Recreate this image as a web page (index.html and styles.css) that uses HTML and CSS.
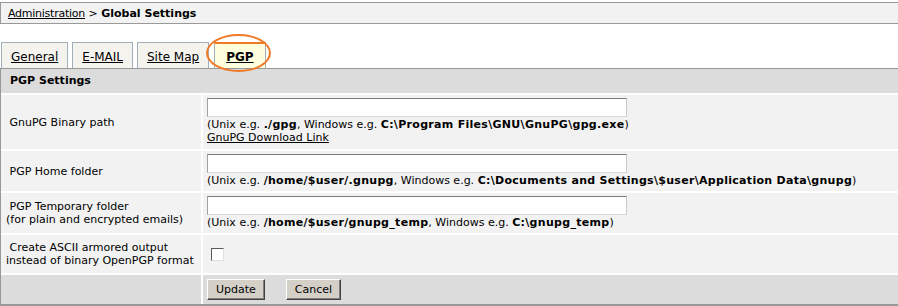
FILE: index.html
```html
<!DOCTYPE html>
<html>
<head>
<meta charset="utf-8">
<title>Global Settings</title>
<link rel="stylesheet" href="styles.css">
</head>
<body>
<div class="crumb"><a href="#">Administration</a> &gt; <b>Global Settings</b></div>

<div class="tabs">
  <a class="tab" href="#">General</a>
  <a class="tab" href="#">E-MAIL</a>
  <a class="tab" href="#">Site Map</a>
  <a class="tab active" href="#">PGP<span class="ring"></span></a>
</div>

<div class="panel">
  <div class="head">PGP Settings</div>

  <div class="label">&nbsp;GnuPG Binary path</div>
  <div class="value first">
    <input class="field" type="text">
    <div class="hint">(Unix e.g. <b>./gpg</b>, Windows e.g. <b>C:\Program Files\GNU\GnuPG\gpg.exe</b>)</div>
    <a class="hint" href="#">GnuPG Download Link</a>
  </div>

  <div class="label">&nbsp;PGP Home folder</div>
  <div class="value">
    <input class="field" type="text">
    <div class="hint">(Unix e.g. <b>/home/$user/.gnupg</b>, Windows e.g. <b>C:\Documents and Settings\$user\Application Data\gnupg</b>)</div>
  </div>

  <div class="label">&nbsp;PGP Temporary folder<br>(for plain and encrypted emails)</div>
  <div class="value">
    <input class="field" type="text">
    <div class="hint">(Unix e.g. <b>/home/$user/gnupg_temp</b>, Windows e.g. <b>C:\gnupg_temp</b>)</div>
  </div>

  <div class="label">&nbsp;Create ASCII armored output<br>instead of binary OpenPGP format</div>
  <div class="value center"><span class="check"></span></div>

  <div class="foot"></div>
  <div class="foot buttons">
    <button class="btn" type="button">Update</button>
    <button class="btn" type="button">Cancel</button>
  </div>
</div>
</body>
</html>
```

FILE: styles.css
```css
html, body {
  margin: 0;
  padding: 0;
  background: #ffffff;
  overflow: hidden;
}
body {
  font-family: "DejaVu Sans", Verdana, sans-serif;
  font-size: 11px;
  line-height: 13px;
  color: #000;
}
a { color: #000; text-decoration: underline; }

.crumb {
  margin-top: 2px;
  height: 20px;
  line-height: 21px;
  padding-left: 7px;
  background: #f2f2f2;
  border-top: 1px solid #999;
  border-bottom: 1px solid #999;
  border-left: 1px solid #999;
}
.crumb a { letter-spacing: -0.25px; }

.tabs {
  display: flex;
  gap: 4px;
  margin-top: 18px;
  padding-left: 1px;
  height: 26px;
  align-items: stretch;
  font-size: 12px;
}
.tab {
  position: relative;
  display: flex;
  align-items: center;
  padding: 3px 9px 0 9px;
  background: #f5f3ee;
  border: 1px solid #9fb0bc;
  border-bottom: none;
}
.tab.active {
  margin-left: 1px;
  padding: 3px 11px 0 11px;
  background: #ffffdd;
  border-top: 2px solid #f07a26;
  font-weight: bold;
}
.ring {
  position: absolute;
  left: -9px;
  top: -10px;
  width: 65px;
  height: 38px;
  box-sizing: border-box;
  border: 2px solid #f07a26;
  border-radius: 50%;
  pointer-events: none;
}

.panel {
  display: grid;
  grid-template-columns: 200px 1fr;
  column-gap: 2px;
  row-gap: 2px;
  background: #fff;
  border-top: 1px solid #999;
  border-left: 1px solid #999;
  border-bottom: 2px solid #999;
}
.head {
  grid-column: 1 / span 2;
  background: #dcdcdc;
  font-weight: bold;
  height: 24px;
  line-height: 24px;
  padding-left: 9px;
}
.label {
  background: #f2f2f2;
  display: flex;
  align-items: center;
  padding: 0 5px;
}
.value {
  background: #f2f2f2;
  padding: 3px 4px 4px 4px;
}
.value.first { padding-bottom: 5px; }
.value b { letter-spacing: 0.3px; }
.value.center {
  display: flex;
  align-items: center;
  padding: 0 4px 0 8px;
  height: 38px;
}
.field {
  display: block;
  box-sizing: border-box;
  width: 420px;
  height: 19px;
  margin: 0 0 1px 0;
  background: #fff;
  border: 1px solid;
  border-color: #7a7a7a #c8c8c8 #d8d8d8 #a0a0a0;
}
.hint { display: block; }
.check {
  display: block;
  width: 13px;
  height: 13px;
  box-sizing: border-box;
  background: #fff;
  border: 1px solid;
  border-color: #5a5a5a #e0e0e0 #e0e0e0 #5a5a5a;
  margin-top: 1px;
}
.foot {
  background: #dcdcdc;
  height: 29px;
}
.buttons {
  display: flex;
  align-items: center;
  gap: 21px;
  padding-left: 4px;
}
.btn {
  font-family: "DejaVu Sans", Verdana, sans-serif;
  font-size: 11px;
  height: 21px;
  padding: 0 8px;
  background: #d4d0c8;
  color: #000;
  border: 1px solid;
  border-color: #ffffff #404040 #404040 #ffffff;
  box-shadow: inset -1px -1px 0 #808080;
}
```
